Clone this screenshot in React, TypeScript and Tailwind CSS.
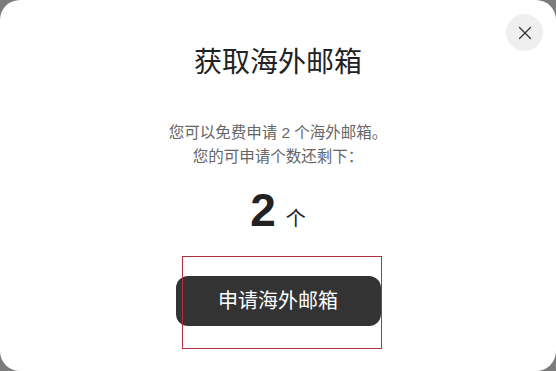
import { X } from "lucide-react";

export default function App() {
  return (
    <div className="h-[371px] w-[556px] bg-[#7b7b7b] font-['Liberation_Sans','Noto_Sans_CJK_SC',sans-serif]">
      <div className="relative flex h-full w-full flex-col items-center rounded-[20px] bg-white">
        {/* Close */}
        <button className="absolute right-[13px] top-[14px] flex h-[37px] w-[37px] items-center justify-center rounded-full bg-[#efefef] text-[#333]">
          <X size={22} strokeWidth={1.3} />
        </button>

        <h1 className="mt-[43px] text-[28px] leading-[40px] font-normal text-[#222]">获取海外邮箱</h1>

        <div className="mt-[38px] text-center text-[15.5px] leading-[24px] text-[#666]">
          <p>您可以免费申请 2 个海外邮箱。</p>
          <p>您的可申请个数还剩下：</p>
        </div>

        <div className="mt-[13px] flex items-baseline gap-[10px] text-[#222]">
          <span className="text-[46px] leading-[56px] font-bold">2</span>
          <span className="text-[20px]">个</span>
        </div>

        <div className="relative mt-[38px]">
          <button className="h-[50px] w-[205px] rounded-[12px] bg-[#333333] text-[20px] text-white">
            申请海外邮箱
          </button>
          {/* highlight annotation */}
          <div className="pointer-events-none absolute left-[6px] top-[-20px] h-[93px] w-[200px] border-[1.5px] border-[#b3303c]" />
        </div>
      </div>
    </div>
  );
}
